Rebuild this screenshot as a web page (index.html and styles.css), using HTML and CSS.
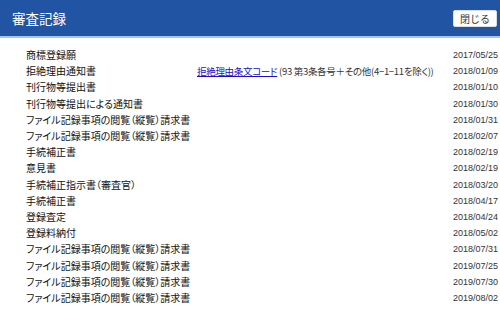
FILE: index.html
```html
<!DOCTYPE html>
<html lang="ja">
<head>
    <meta charset="utf-8">
    <title>審査記録</title>
    <link rel="stylesheet" href="styles.css">
</head>
<body>
    <div class="header">
        <h1>審査記録</h1>
        <button class="close-btn">閉じる</button>
    </div>

    <table class="records">
        <tr><td class="name">商標登録願</td><td class="detail"></td><td class="date">2017/05/25</td></tr>
        <tr><td class="name">拒絶理由通知書</td><td class="detail"><a href="#">拒絶理由条文コード</a> (93 第3条各号＋その他(4−1−11を除く))</td><td class="date">2018/01/09</td></tr>
        <tr><td class="name">刊行物等提出書</td><td class="detail"></td><td class="date">2018/01/10</td></tr>
        <tr><td class="name">刊行物等提出による通知書</td><td class="detail"></td><td class="date">2018/01/30</td></tr>
        <tr><td class="name">ファイル記録事項の閲覧（縦覧）請求書</td><td class="detail"></td><td class="date">2018/01/31</td></tr>
        <tr><td class="name">ファイル記録事項の閲覧（縦覧）請求書</td><td class="detail"></td><td class="date">2018/02/07</td></tr>
        <tr><td class="name">手続補正書</td><td class="detail"></td><td class="date">2018/02/19</td></tr>
        <tr><td class="name">意見書</td><td class="detail"></td><td class="date">2018/02/19</td></tr>
        <tr><td class="name">手続補正指示書（審査官）</td><td class="detail"></td><td class="date">2018/03/20</td></tr>
        <tr><td class="name">手続補正書</td><td class="detail"></td><td class="date">2018/04/17</td></tr>
        <tr><td class="name">登録査定</td><td class="detail"></td><td class="date">2018/04/24</td></tr>
        <tr><td class="name">登録料納付</td><td class="detail"></td><td class="date">2018/05/02</td></tr>
        <tr><td class="name">ファイル記録事項の閲覧（縦覧）請求書</td><td class="detail"></td><td class="date">2018/07/31</td></tr>
        <tr><td class="name">ファイル記録事項の閲覧（縦覧）請求書</td><td class="detail"></td><td class="date">2019/07/25</td></tr>
        <tr><td class="name">ファイル記録事項の閲覧（縦覧）請求書</td><td class="detail"></td><td class="date">2019/07/30</td></tr>
        <tr><td class="name">ファイル記録事項の閲覧（縦覧）請求書</td><td class="detail"></td><td class="date">2019/08/02</td></tr>
    </table>
</body>
</html>
```

FILE: styles.css
```css
body {
    margin: 0;
    background: #fff;
    font-family: "Liberation Sans", "Noto Sans CJK JP", sans-serif;
    color: #222;
}
.header {
    height: 36px;
    background: #2155a3;
    border-bottom: 2px solid #a9c3e6;
    display: flex;
    align-items: center;
    justify-content: space-between;
    padding: 0 3px 0 12px;
}
.header h1 {
    margin: 0;
    font-family: "Noto Sans CJK JP", sans-serif;
    font-size: 13.5px;
    font-weight: normal;
    color: #fff;
}
.close-btn {
    width: 44px;
    height: 17px;
    padding: 0;
    background: #fff;
    border: 1px solid #d8dde6;
    border-radius: 2px;
    font-family: "Noto Sans CJK JP", sans-serif;
    font-size: 10px;
    color: #333;
    line-height: 15px;
}
.records {
    border-collapse: collapse;
    table-layout: fixed;
    margin: 9px 0 0 26px;
    width: 472px;
    font-size: 10px;
}
.records td {
    padding: 0;
    height: 16.2px;
    line-height: 16.2px;
    white-space: nowrap;
    vertical-align: middle;
}
.name {
    width: 171px;
    font-family: "Noto Sans CJK JP", sans-serif;
    font-feature-settings: "palt";
    color: #111;
}
.detail {
    font-family: "Noto Sans CJK JP", sans-serif;
    font-feature-settings: "palt";
    font-size: 9.5px;
    letter-spacing: -0.3px;
    color: #333;
}
.detail a {
    color: #1a0dcc;
    text-decoration: underline;
}
.date {
    width: 47px;
    text-align: right;
    font-size: 9px;
    color: #333;
}
```
